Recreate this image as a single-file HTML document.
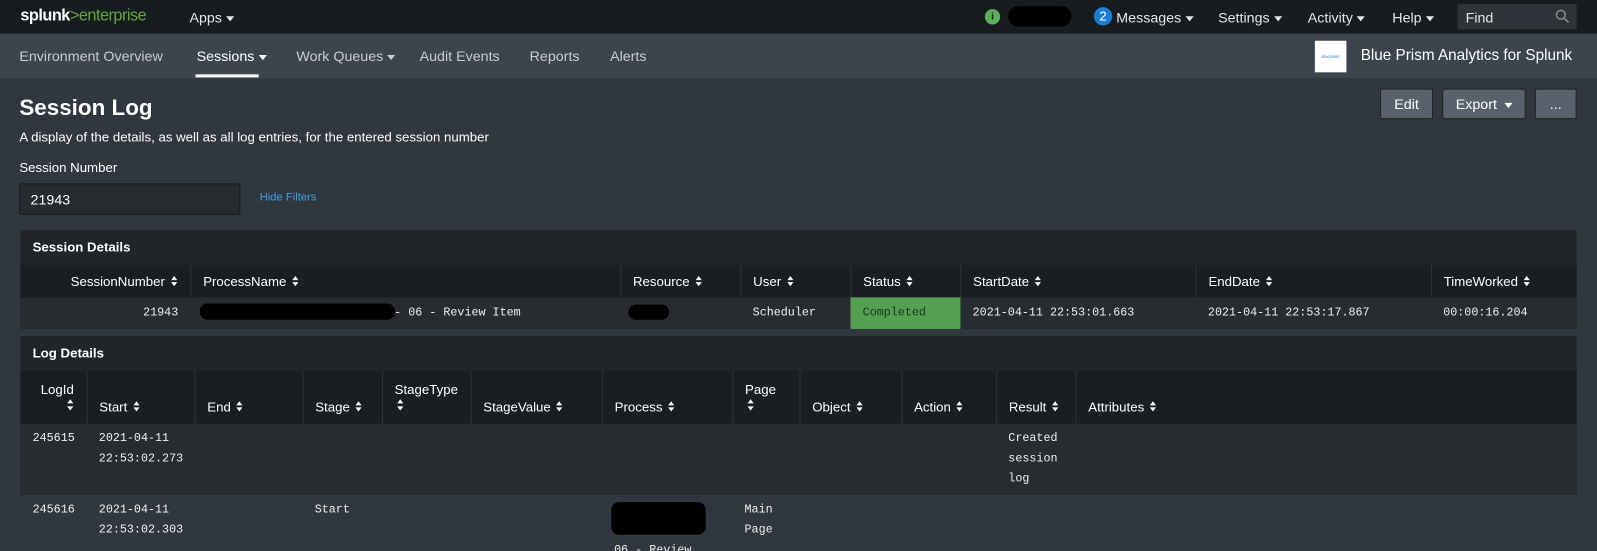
<!DOCTYPE html>
<html><head><style>
*{box-sizing:border-box;margin:0;padding:0}
html,body{width:1597px;height:551px;overflow:hidden;background:#31373e}
body{font-family:"Liberation Sans",sans-serif;color:#fff;position:relative}
#w{position:absolute;left:0;top:0;width:1568px;height:541px;transform:scale(1.01849);transform-origin:0 0}
.abs{position:absolute;white-space:nowrap}
.top{position:absolute;left:0;top:0;width:1568px;height:33px;background:#171c20}
.nav{position:absolute;left:0;top:33px;width:1568px;height:44px;background:#3c444d}
.t{font-size:14px;color:#e6e6e6}
.caret{display:inline-block;width:0;height:0;border-left:4px solid transparent;border-right:4px solid transparent;border-top:5px solid currentColor;vertical-align:middle;margin-left:4px}
.btn{position:absolute;top:87px;height:30px;background:#59626c;border:1px solid #222;border-radius:2px;font-size:14px;color:#fff;text-align:center;line-height:28px}
.panel{position:absolute;left:20px;width:1528px;background:#212529}
.ph{height:34px;font-size:13px;font-weight:bold;padding:9px 12px}
table{border-collapse:collapse;width:100%;table-layout:fixed}
th{background:#1a1e22;font-weight:normal;font-size:13px;text-align:left;padding:0 12px;border-left:1px solid #2e3439;color:#fff}
th:first-child{border-left:none}
td{font-family:"Liberation Mono",monospace;font-size:11.5px;padding:0 12px;vertical-align:top;color:#f0f0f0}
.s{display:inline-block;width:7px;height:11px;vertical-align:-1px;margin-left:2px;background:#fff;clip-path:polygon(50% 0,100% 42%,0 42%,0 58%,100% 58%,50% 100%,50% 100%,0 58%)}
.s{background:none;clip-path:none;position:relative}
.s::before,.s::after{content:"";position:absolute;left:0;border-left:3.5px solid transparent;border-right:3.5px solid transparent}
.s::before{top:0;border-bottom:4.5px solid #fff}
.s::after{top:6.5px;border-top:4.5px solid #fff}
.blk{position:absolute;background:#000;border-radius:10px}
</style></head><body><div id="w">
<div class="top"></div>
<div class="abs" style="left:20px;top:7px;font-size:16px;font-weight:bold;letter-spacing:-0.5px">splunk<span style="color:#65a637;font-weight:normal">&gt;enterprise</span></div>
<div class="abs t" style="left:186px;top:9px">Apps<span class="caret"></span></div>
<div class="abs" style="left:967px;top:9px;width:15px;height:15px;border-radius:50%;background:#5cb05c;font-size:10px;text-align:center;line-height:15px;font-weight:bold;color:#222">i</div>
<div class="blk" style="left:990px;top:6px;width:62px;height:20px"></div>
<div class="abs" style="left:1074px;top:7px;width:18px;height:18px;border-radius:50%;background:#1a7ed2;font-size:13px;text-align:center;line-height:18px">2</div>
<div class="abs t" style="left:1096px;top:9px">Messages<span class="caret"></span></div>
<div class="abs t" style="left:1196px;top:9px">Settings<span class="caret"></span></div>
<div class="abs t" style="left:1284px;top:9px">Activity<span class="caret"></span></div>
<div class="abs t" style="left:1367px;top:9px">Help<span class="caret"></span></div>
<div class="abs" style="left:1431px;top:4px;width:117px;height:25px;background:#2d3339;border-radius:2px"></div>
<div class="abs t" style="left:1439px;top:9px">Find</div>
<svg class="abs" style="left:1527px;top:9px" width="14" height="14" viewBox="0 0 14 14"><circle cx="5.5" cy="5.5" r="4.3" fill="none" stroke="#888" stroke-width="1.5"/><path d="M8.7 8.7L13 13" stroke="#888" stroke-width="1.6"/></svg>
<div class="nav"></div>
<div class="abs t" style="left:19px;top:47px;color:#ccc">Environment Overview</div>
<div class="abs t" style="left:193px;top:47px;color:#fff">Sessions<span class="caret"></span></div>
<div class="abs" style="left:192px;top:73px;width:62px;height:3px;background:#fff"></div>
<div class="abs t" style="left:291px;top:47px;color:#ccc">Work Queues<span class="caret"></span></div>
<div class="abs t" style="left:412px;top:47px;color:#ccc">Audit Events</div>
<div class="abs t" style="left:520px;top:47px;color:#ccc">Reports</div>
<div class="abs t" style="left:599px;top:47px;color:#ccc">Alerts</div>
<div class="abs" style="left:1291px;top:40px;width:31px;height:31px;background:#fff;font-size:4px;color:#3a7bd5;line-height:31px;text-align:center">blueprism</div>
<div class="abs" style="left:1336px;top:46px;font-size:15px">Blue Prism Analytics for Splunk</div>
<div class="abs" style="left:19px;top:93px;font-size:22px;font-weight:bold">Session Log</div>
<div class="abs" style="left:19px;top:127px;font-size:13px">A display of the details, as well as all log entries, for the entered session number</div>
<div class="abs" style="left:19px;top:157px;font-size:13px">Session Number</div>
<div class="abs" style="left:19px;top:180px;width:217px;height:31px;background:#272b30;border:1px solid #16191c;border-radius:2px;font-size:14px;padding:7px 10px">21943</div>
<div class="abs" style="left:255px;top:188px;font-size:11px;color:#3c9fe8">Hide Filters</div>
<div class="btn" style="left:1355px;width:52px">Edit</div>
<div class="btn" style="left:1416px;width:82px">Export<span class="caret" style="margin-left:7px"></span></div>
<div class="btn" style="left:1507px;width:41px">...</div>

<div class="panel" style="top:226px">
<div class="ph">Session Details</div>
<table><colgroup><col style="width:167px"><col style="width:422px"><col style="width:118px"><col style="width:108px"><col style="width:108px"><col style="width:231px"><col style="width:231px"><col></colgroup>
<tr style="height:32px"><th style="text-align:right">SessionNumber <span class="s"></span></th><th>ProcessName <span class="s"></span></th><th>Resource <span class="s"></span></th><th>User <span class="s"></span></th><th>Status <span class="s"></span></th><th>StartDate <span class="s"></span></th><th>EndDate <span class="s"></span></th><th>TimeWorked <span class="s"></span></th></tr>
<tr style="height:31px;background:#272c31"><td style="text-align:right;vertical-align:middle">21943</td><td style="vertical-align:middle;padding-left:200px">- 06 - Review Item</td><td></td><td style="vertical-align:middle">Scheduler</td><td style="vertical-align:middle;background:#53a051;color:#1b3a1b">Completed</td><td style="vertical-align:middle">2021-04-11 22:53:01.663</td><td style="vertical-align:middle">2021-04-11 22:53:17.867</td><td style="vertical-align:middle">00:00:16.204</td></tr>
</table></div>
<div class="blk" style="left:196px;top:298px;width:192px;height:16px"></div>
<div class="blk" style="left:617px;top:299px;width:40px;height:15px"></div>

<div class="panel" style="top:330px;background:#212529">
<div class="ph">Log Details</div>
<table><colgroup><col style="width:65px"><col style="width:106px"><col style="width:106px"><col style="width:78px"><col style="width:87px"><col style="width:129px"><col style="width:128px"><col style="width:66px"><col style="width:100px"><col style="width:93px"><col style="width:78px"><col></colgroup>
<tr style="height:52px"><th style="text-align:right;padding:0 12px 0 0">LogId<br><span class="s"></span></th><th style="padding-top:18px">Start <span class="s"></span></th><th style="padding-top:18px">End <span class="s"></span></th><th style="padding-top:18px">Stage <span class="s"></span></th><th>StageType<br><span class="s"></span></th><th style="padding-top:18px">StageValue <span class="s"></span></th><th style="padding-top:18px">Process <span class="s"></span></th><th>Page<br><span class="s"></span></th><th style="padding-top:18px">Object <span class="s"></span></th><th style="padding-top:18px">Action <span class="s"></span></th><th style="padding-top:18px">Result <span class="s"></span></th><th style="padding-top:18px">Attributes <span class="s"></span></th></tr>
<tr style="height:70px;background:#272c31;line-height:20px"><td style="padding:5px 0 0 12px">245615</td><td style="padding-top:5px">2021-04-11 22:53:02.273</td><td></td><td></td><td></td><td></td><td></td><td></td><td></td><td></td><td style="padding-top:5px">Created session log</td><td></td></tr>
<tr style="height:70px;background:#31373e;line-height:20px"><td style="padding:5px 0 0 12px">245616</td><td style="padding-top:5px">2021-04-11 22:53:02.303</td><td></td><td style="padding-top:5px">Start</td><td></td><td></td><td style="padding-top:5px"><br>&nbsp;&nbsp;&nbsp;&nbsp;&nbsp;&nbsp;&nbsp;&nbsp;&nbsp;&nbsp;-<br>06 - Review</td><td style="padding-top:5px">Main Page</td><td></td><td></td><td></td><td></td></tr>
</table></div>
<div class="blk" style="left:600px;top:493px;width:93px;height:32px;border-radius:8px"></div>
</div></body></html>
